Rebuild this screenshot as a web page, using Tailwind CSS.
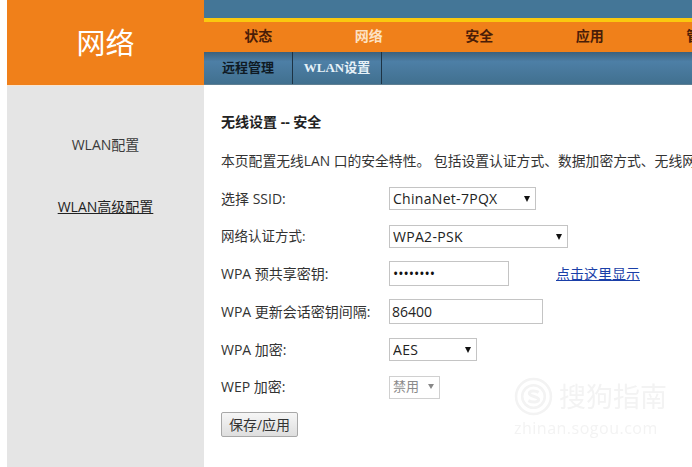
<!DOCTYPE html>
<html lang="zh-CN">
<head>
    <meta charset="UTF-8">
    <title>WLAN设置</title>
    <script src="https://cdn.jsdelivr.net/npm/@tailwindcss/browser@4"></script>
</head>
<body class="bg-white h-[467px] w-[692px] overflow-hidden relative font-['Open_Sans','Noto_Sans_CJK_SC',sans-serif] text-[#333] text-[14px]">
    <div class="flex h-[467px] pl-[7px]">
        <!-- Left column -->
        <div class="w-[197px] shrink-0 flex flex-col">
            <div class="h-[85px] bg-[#f0801a] text-white text-[29px] flex items-center justify-center">网络</div>
            <div class="flex-1 bg-[#e5e5e5] border-t border-[#f8e4cf] flex flex-col items-center pt-[48px] text-[14px] text-[#3a3a3a]">
                <a class="h-[22px] leading-[22px]">WLAN配置</a>
                <a class="h-[22px] leading-[22px] mt-[40px] underline text-[#222]">WLAN高级配置</a>
            </div>
        </div>
        <!-- Right column -->
        <div class="flex-1 min-w-0 flex flex-col">
            <div class="h-[18px] bg-[#447697]"></div>
            <div class="h-[4px] bg-[#fbc80f]"></div>
            <div class="h-[30px] bg-[#f0801a] flex font-bold text-[14px] text-[#4a1d08] whitespace-nowrap">
                <div class="w-[110.5px] shrink-0 flex items-center justify-center pr-[2px] pb-[3px]">状态</div>
                <div class="w-[110.5px] shrink-0 flex items-center justify-center pr-[2px] pb-[3px] text-[#fde2c4]">网络</div>
                <div class="w-[110.5px] shrink-0 flex items-center justify-center pr-[2px] pb-[3px]">安全</div>
                <div class="w-[110.5px] shrink-0 flex items-center justify-center pr-[2px] pb-[3px]">应用</div>
                <div class="w-[110.5px] shrink-0 flex items-center justify-center pr-[2px] pb-[3px]">管理</div>
            </div>
            <div class="h-[33px] flex bg-gradient-to-b from-[#3c617c] via-[#4d7fa6] via-30% to-[#41708f] border-b border-[#5f7f92] text-[13px] font-bold whitespace-nowrap">
                <div class="w-[89px] flex items-center justify-center text-[#0f1a24] border-r border-[#1d3344]">远程管理</div>
                <div class="w-[89px] flex items-center justify-center text-[#e6f1f8] border-r border-[#1d3344] font-['Liberation_Serif','Noto_Sans_CJK_SC',serif]">WLAN设置</div>
            </div>
            <div class="pl-[17px] whitespace-nowrap">
                <h2 class="font-bold text-[14px] text-[#222] mt-[27px] leading-[20px]">无线设置 -- 安全</h2>
                <p class="mt-[19px] leading-[20px] text-[13.8px]">本页配置无线LAN 口的安全特性。 包括设置认证方式、数据加密方式、无线网络密钥等内容。</p>
                <form class="mt-[9px] grid grid-cols-[168px_1fr] auto-rows-[37.6px] items-center">
                    <label>选择 SSID:</label>
                    <div class="relative w-[147px] h-[23px]">
                        <select class="appearance-none w-full h-full bg-white border border-[#c4c4c4] pl-[3px] text-[14px] tracking-[0.3px] text-[#222]"><option>ChinaNet-7PQX</option></select>
                        <span class="absolute right-[6px] top-[9px] w-0 h-0 border-x-[3.5px] border-x-transparent border-t-[6px] border-t-[#111]"></span>
                    </div>
                    <label class="text-[13.5px]">网络认证方式:</label>
                    <div class="relative w-[179px] h-[23px]">
                        <select class="appearance-none w-full h-full bg-white border border-[#c4c4c4] pl-[3px] text-[14px] tracking-[0.3px] text-[#222]"><option>WPA2-PSK</option></select>
                        <span class="absolute right-[6px] top-[9px] w-0 h-0 border-x-[3.5px] border-x-transparent border-t-[6px] border-t-[#111]"></span>
                    </div>
                    <label>WPA 预共享密钥:</label>
                    <div class="flex items-center">
                        <input type="password" value="12345678" class="w-[120px] h-[25px] border border-[#c4c4c4] px-[3px] text-[14px] text-[#111]">
                        <a class="ml-[47px] text-[#1a3fa8] underline">点击这里显示</a>
                    </div>
                    <label>WPA 更新会话密钥间隔:</label>
                    <input type="text" value="86400" class="w-[154px] h-[25px] border border-[#c4c4c4] px-[2px] text-[14px] text-[#222]">
                    <label>WPA 加密:</label>
                    <div class="relative w-[88px] h-[23px]">
                        <select class="appearance-none w-full h-full bg-white border border-[#c4c4c4] pl-[3px] text-[14px] tracking-[0.3px] text-[#222]"><option>AES</option></select>
                        <span class="absolute right-[6px] top-[9px] w-0 h-0 border-x-[3.5px] border-x-transparent border-t-[6px] border-t-[#111]"></span>
                    </div>
                    <label>WEP 加密:</label>
                    <div class="relative w-[51px] h-[23px]">
                        <select disabled class="appearance-none w-full h-full bg-white border border-[#d0d0d0] pl-[3px] text-[13px] text-[#8a8a8a] opacity-100"><option>禁用</option></select>
                        <span class="absolute right-[6px] top-[9px] w-0 h-0 border-x-[3px] border-x-transparent border-t-[5px] border-t-[#888]"></span>
                    </div>
                    <div>
                        <button type="button" class="w-[77px] h-[25px] bg-gradient-to-b from-[#f6f6f6] to-[#dedede] border border-[#a8a8a8] rounded-[2px] text-[14px] text-[#333]">保存/应用</button>
                    </div>
                </form>
            </div>
        </div>
    </div>
    <!-- Watermark -->
    <div class="absolute left-[514px] top-[377px] w-[160px] text-[#f3f3f3] blur-[0.5px] pointer-events-none">
        <div class="flex items-center gap-[6px]">
            <svg width="39" height="39" viewBox="0 0 38 38" fill="none" stroke="#f3f3f3" stroke-width="2.5">
                <circle cx="19" cy="19" r="17"/>
                <circle cx="19" cy="19" r="11"/>
                <path d="M24 15c-3-2-9-2-9 1s9 3 9 6-6 3-10 1" stroke-width="3"/>
            </svg>
            <span class="text-[27px] leading-[38px] tracking-[0px] whitespace-nowrap">搜狗指南</span>
        </div>
        <div class="text-[16px] tracking-[0.5px] leading-[18px] mt-[3px] whitespace-nowrap">zhinan.sogou.com</div>
    </div>
</body>
</html>
